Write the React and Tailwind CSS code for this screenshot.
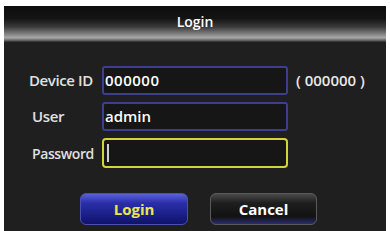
export default function App() {
  const font = { fontFamily: '"Open Sans", "Liberation Sans", sans-serif' };
  return (
    <div className="w-[390px] h-[231px] bg-white overflow-hidden pl-[4px] pr-[4px] pt-[6px]" style={font}>
      <div className="w-[382px] h-[240px] bg-[#1f1f1f] flex flex-col">
        <div className="h-[36px] flex items-center justify-center bg-[linear-gradient(180deg,#0c0c0c_0%,#141414_35%,#3a3a3a_58%,#7a7a7a_76%,#a8a8a8_88%,#6a6a6a_95%,#2a2a2a_100%)]">
          <span className="text-white text-[14px] font-semibold -mt-[6px]">Login</span>
        </div>
        <div className="flex flex-col gap-[7px] pt-[24px] pl-[25px]">
          <div className="flex items-center h-[29px]">
            <span className="w-[73px] text-[#e0e0e0] text-[15px] font-semibold tracking-[-0.4px]">Device ID</span>
            <div className="w-[186px] h-[29px] border-2 border-[#3c3f8c] rounded-[3px] bg-[#161616] flex items-center pl-[1px]">
              <span className="text-white text-[15px] font-semibold tracking-[0.5px]">000000</span>
            </div>
            <span className="ml-[8px] text-[#e8e8e8] text-[15px] font-semibold">( 000000 )</span>
          </div>
          <div className="flex items-center h-[29px]">
            <span className="w-[73px] text-[#e0e0e0] text-[15px] font-semibold pl-[3px] tracking-[-0.4px]">User</span>
            <div className="w-[186px] h-[29px] border-2 border-[#3c3f8c] rounded-[3px] bg-[#161616] flex items-center pl-[1px]">
              <span className="text-white text-[15px] font-semibold">admin</span>
            </div>
          </div>
          <div className="flex items-center h-[30px]">
            <span className="w-[73px] text-[#e0e0e0] text-[14px] font-semibold pl-[3px] tracking-[-0.4px]">Password</span>
            <div className="w-[186px] h-[30px] border-2 border-[#d6d23a] rounded-[4px] bg-[#161616] flex items-center pl-[3px]">
              <div className="w-[2px] h-[18px] bg-[#cfcfcf]" />
            </div>
          </div>
        </div>
        <div className="flex gap-[22px] pt-[25px] pl-[76px]">
          <div className="w-[108px] h-[32px] rounded-[6px] border border-[#4a4fb0] bg-[linear-gradient(180deg,#5a60d8_0%,#2a2fa8_30%,#1a1e86_70%,#10136a_100%)] flex items-center justify-center">
            <span className="text-[#e8e84a] text-[15px] font-bold">Login</span>
          </div>
          <div className="w-[107px] h-[32px] rounded-[6px] border border-[#5a5a5a] bg-[linear-gradient(180deg,#4a4a4a_0%,#1e1e1e_30%,#121212_75%,#2a2c70_100%)] flex items-center justify-center">
            <span className="text-white text-[15px] font-bold">Cancel</span>
          </div>
        </div>
      </div>
    </div>
  );
}
